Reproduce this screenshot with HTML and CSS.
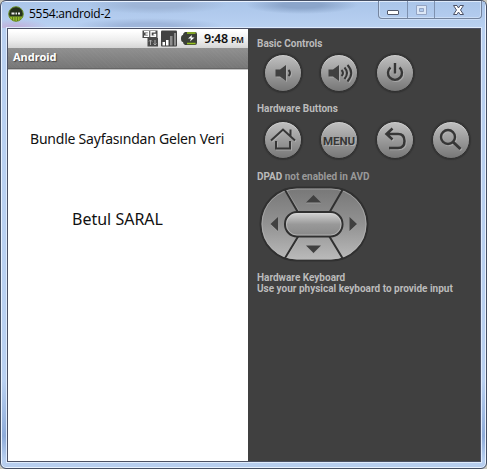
FILE: index.html
```html
<!DOCTYPE html>
<html lang="tr">
<head>
<meta charset="utf-8">
<title>5554:android-2</title>
<link rel="stylesheet" href="styles.css">
</head>
<body>
<svg class="defs" width="0" height="0" aria-hidden="true">
  <defs>
    <linearGradient id="metal" x1="0" y1="0" x2="0" y2="1"><stop offset="0" stop-color="#d8d8d8"/><stop offset=".5" stop-color="#999"/><stop offset="1" stop-color="#888"/></linearGradient>
    <linearGradient id="pad" x1="0" y1="0" x2="0" y2="1"><stop offset="0" stop-color="#777"/><stop offset=".5" stop-color="#929292"/><stop offset="1" stop-color="#bbb"/></linearGradient>
  </defs>
</svg>
<div class="window">
  <header class="titlebar">
    <svg class="app-icon" width="16" height="16" viewBox="0 0 16 16"><circle cx="8" cy="8" r="7.3" fill="#25301c" stroke="#6d9429"/><path d="M1.500 10.500h13Q12.500 15 8 15T1.500 10.500" fill="#95bd2d"/><path d="M4.500 11v3M7 11v4M9.500 11v4M12 11v3" stroke="#486319" stroke-width=".7"/><path d="M3.500 7.500h3M7.500 7.500h1.500M10 7.500h2" stroke="#eee" stroke-width="1.800"/></svg>
    <span class="title">5554:android-2</span>
    <div class="caption">
      <span class="cap"><svg width="28" height="18"><rect x="8.500" y="9.500" width="11" height="4" rx=".5" fill="#fff" stroke="#53596b"/></svg></span>
      <span class="cap"><svg width="26" height="18"><path d="M8.500 4.500h10v9h-10zM11.500 7.500h4v3h-4z" fill="#dce7f6" fill-rule="evenodd" stroke="#94a4c3"/></svg></span>
      <span class="cap close"><svg width="46" height="18"><path d="M18.500 4.500h3.500L23.500 7l1.500-2.500h3.500L25.500 9l3 4.500H25l-1.500-2.500-1.500 2.500h-3.500L21.500 9z" fill="#fff" stroke="#4d5368"/></svg></span>
    </div>
  </header>
  <main class="client">
    <section class="screen">
      <div class="status">
        <svg class="status-icons" width="56" height="18" viewBox="0 0 56 18">
          <path d="M.5 1.500h15v7.500h.5v8.500H5.500V9h-5z" fill="#494949"/><path d="M2 2.700h4.500v4.600H2M3.500 5h3M13.500 2.700H9v4.600h4.500V5.500h-2" fill="none" stroke="#fff" stroke-width="1.400"/><path d="M8.500 16v-5M7 12.500l1.500-1.500 1.500 1.500M13 11v5m-1.500-1.500L13 16l1.500-1.500" fill="none" stroke="#aaa"/>
          <rect x="19" y="1.500" width="16" height="16" rx="1" fill="#424242"/><path d="M20.500 13h2.500v3.500h-2.500zM24 11h2.500v5.500H24z" fill="#fff"/><path d="M28 7h2.500v9.500H28zM32 4h2v12.500h-2z" fill="#8d8d8d"/>
          <path d="M43 3h10q2 0 2 2v9q0 2-2 2H43q-2-1-2-3-2 0-2-3.500T41 6q0-2 2-3z" fill="#3c4038"/><path d="M45 4h8.500M45 14.500h8.500" stroke="#97c21f" stroke-width="1.500"/><path d="M50 6l-4 3.500h3l-1 3 4.500-4h-3z" fill="#fff"/>
        </svg>
        <span class="clock">9:48 <small>PM</small></span>
      </div>
      <div class="appbar">Android</div>
      <p class="label">Bundle Sayfasından Gelen Veri</p>
      <p class="value">Betul SARAL</p>
    </section>
    <aside class="controls">
      <h2 class="heading basic">Basic Controls</h2>
      <div class="buttons row-basic">
        <span class="round"><svg class="icon" width="36" height="36" viewBox="0 0 36 36"><path d="M10.500 14.500h4.500l6-4.500v16l-6-4.500h-4.500z" class="solid"/><path d="M23.500 15q3 3 0 6" class="line"/></svg></span>
        <span class="round"><svg class="icon" width="36" height="36" viewBox="0 0 36 36"><path d="M7.500 14.500H12l6-4.500v16l-6-4.500H7.500z" class="solid"/><path d="M20.500 15q3 3 0 6M23.500 12.500q5 5.500 0 11.500M26.500 10q7.500 8 0 16.500" class="line"/></svg></span>
        <span class="round"><svg class="icon" width="36" height="36" viewBox="0 0 36 36"><path d="M13.500 12.500a7 7 0 1 0 9 0M18 8v10.500" class="line thick"/></svg></span>
      </div>
      <h2 class="heading hardware">Hardware Buttons</h2>
      <div class="buttons row-hardware">
        <span class="round"><svg class="icon" width="36" height="36" viewBox="0 0 36 36"><path d="M6 18.500L18 7.500l12 11M25.500 14V7.500M11 19v7.500h14V19" class="line"/></svg></span>
        <span class="round menu">MENU</span>
        <span class="round"><svg class="icon" width="36" height="36" viewBox="0 0 36 36"><path d="M15.500 6.500L9.500 12l6 5.500M9.500 12H21q6.500 0 6.500 7t-6.500 7h-9" class="line back"/></svg></span>
        <span class="round"><svg class="icon" width="36" height="36" viewBox="0 0 36 36"><circle cx="15" cy="15" r="7" class="line thick"/><path d="M20 20l7.500 7" class="line search"/></svg></span>
      </div>
      <h2 class="heading dpad-title">DPAD <span>not enabled in AVD</span></h2>
      <svg class="dpad" width="110" height="76" viewBox="0 0 110 76">
        <rect x="1.500" y="1.500" width="107" height="73" rx="36.500" fill="url(#pad)" stroke="#303030" stroke-width="2"/>
        <rect x="3" y="3" width="104" height="70" rx="35" fill="none" stroke="#bbb" stroke-opacity=".55"/>
        <path d="M25.500 3L40 28M84 3L69.500 28M40 49L25.500 73M69.500 49L84 73" stroke="#303030" stroke-width="2"/>
        <path d="M27.500 4L40.500 26M27.500 72L41.500 50" stroke="#bbb" stroke-opacity=".4"/>
        <rect x="26" y="26" width="57.500" height="24.500" rx="12" fill="url(#metal)" stroke="#303030" stroke-width="2"/>
        <rect x="27.500" y="27.500" width="54.500" height="21.500" rx="10.500" fill="none" stroke="#ddd" stroke-opacity=".45"/>
        <g class="arrows"><path d="M47 16.500L54.500 9l7.500 7.500zM47 59.500l7.500 7.500 7.500-7.500zM19 31l-7.500 7 7.500 7zM90.500 31l7.500 7-7.500 7z"/></g>
      </svg>
      <div class="heading keyboard">Hardware Keyboard<br>Use your physical keyboard to provide input</div>
    </aside>
  </main>
</div>
</body>
</html>
```

FILE: styles.css
```css
* { box-sizing: border-box; }
body { margin: 0; background: #c9c7bd; overflow: hidden; font-family: "Noto Sans", sans-serif; }
.defs { position: absolute; }
.window {
  width: 487px;
  height: 469px;
  padding: 0 5px 6px 6px;
  border: 1px solid #454f64;
  border-radius: 6px;
  box-shadow: inset 0 0 0 1px #e9f2ff;
  background: linear-gradient(#b3cdf000 380px, #8eabd9 435px, #b7ceef 458px), #b9d0f1;
}
.titlebar {
  display: flex;
  height: 26px;
  margin: 1px -4px 0 -5px;
  padding-left: 6px;
  background:
    radial-gradient(ellipse 56px 9px at 300px 3px, #8ba5ca 0 35%, transparent),
    radial-gradient(ellipse 70px 9px at 155px 3px, #9eb5d7 0 35%, transparent),
    radial-gradient(ellipse 75px 8px at 146px 24px, #9eb5da 0 35%, transparent),
    radial-gradient(ellipse 35px 8px at 12px 25px, #c1aed8, transparent),
    linear-gradient(#aac5e9, #b9d1f2);
}
.app-icon { margin-top: 4px; }
.title { margin: 3px 0 0 5px; font: 12px/17px "Open Sans", sans-serif; letter-spacing: -.25px; color: #000; white-space: nowrap; }
.caption {
  display: flex;
  height: 18px;
  margin: -1px 3px 0 auto;
  border: 1px solid #75859f;
  border-top: 0;
  border-radius: 0 0 4px 4px;
  box-shadow: inset 0 0 0 1px #d7e6f9aa, 0 1px #d8e7faaa;
}
.cap { height: 17px; border-right: 1px solid #7e91af; }
.close { border-right: 0; }
.cap svg, .icon, .dpad { display: block; }
.client { display: flex; width: 474px; height: 434px; border: 1px solid #4b5064; box-shadow: 0 0 0 1px #dfebfc; }
.screen { width: 240px; background: #fff; color: #111; }
.status {
  display: flex;
  height: 19px;
  padding-left: 134px;
  background: linear-gradient(#fff 2px, #eee 11px, #d5d5d5);
}
.clock { margin-left: 6px; font: 600 12.5px/20px "Noto Sans", sans-serif; letter-spacing: -.25px; white-space: nowrap; }
.clock small { font-size: 8.5px; letter-spacing: -.1px; }
.appbar {
  height: 21px;
  padding-left: 5px;
  background: repeating-linear-gradient(45deg, #ffffff05 0 1px, transparent 1px 3px), linear-gradient(#909090, #777);
  border-bottom: 1px solid #666;
  box-shadow: 0 1px #c5c5c5;
  font-size: 11px;
  line-height: 18px;
  font-weight: 700;
  color: #fff;
  text-shadow: 1px 1px 1px #444;
}
.label, .value { margin: 0; white-space: nowrap; }
.label { padding: 60px 0 0 22px; font-size: 14px; line-height: 20px; letter-spacing: -.22px; }
.value { padding: 58px 0 0 64px; font-size: 16px; line-height: 24px; }
.controls { width: 232px; padding-left: 9px; background: #404040; }
.heading { margin: 0; font: 700 10px/12px Roboto, sans-serif; color: #bbb; white-space: nowrap; }
.basic { padding-top: 9px; }
.buttons { display: flex; gap: 18px; margin-left: 7px; }
.row-basic { margin-top: 4px; }
.hardware { margin-top: 11px; }
.row-hardware { margin-top: 6px; }
.round {
  flex: none;
  width: 38px;
  height: 38px;
  border: 1px solid #303030;
  border-radius: 50%;
  background: linear-gradient(#c0c0c0, #9b9b9b 50%, #777);
  box-shadow: 0 0 1px 1px #333, inset 0 1px #d0d0d0;
}
.menu { display: flex; align-items: center; justify-content: center; padding-top: 2px; font: 700 11.5px/12px Roboto, sans-serif; color: #363636; text-shadow: 1px 1px #b0b0b0; }
.line { fill: none; stroke: #363636; stroke-width: 2; }
.thick { stroke-width: 2.4; }
.search { stroke-width: 3; }
.back { stroke-width: 2.5; }
.solid { fill: #404040; }
.icon { filter: drop-shadow(1px 1px 0 #b5b5b5aa); }
.dpad-title { margin-top: 12px; letter-spacing: -.03px; }
.dpad-title span { color: #999; }
.dpad { margin: 3px 0 0 2px; }
.arrows { fill: #404040; filter: drop-shadow(0 1px 0 #aaa9); }
.keyboard { margin-top: 10px; line-height: 11px; }
```
